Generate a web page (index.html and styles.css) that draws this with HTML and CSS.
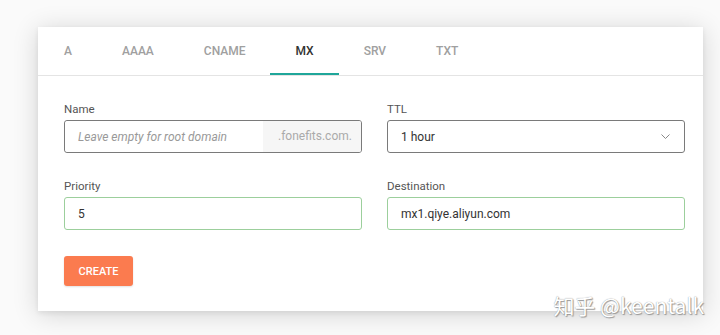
FILE: index.html
```html
<!DOCTYPE html>
<html lang="en">

<head>
    <meta charset="UTF-8">
    <meta name="viewport" content="width=device-width, initial-scale=1.0">
    <title>DNS Records</title>
    <link rel="stylesheet" href="styles.css">
</head>

<body>
    <div class="card">
        <!-- Record types -->
        <div class="tabs">
            <div class="tab">A</div>
            <div class="tab">AAAA</div>
            <div class="tab">CNAME</div>
            <div class="tab active">MX</div>
            <div class="tab">SRV</div>
            <div class="tab">TXT</div>
        </div>

        <!-- MX record form -->
        <form class="record-form">
            <div class="form-row">
                <div class="form-group">
                    <label>Name</label>
                    <div class="input-group">
                        <input class="form-control" type="text" placeholder="Leave empty for root domain">
                        <span class="addon">.fonefits.com.</span>
                    </div>
                </div>
                <div class="form-group">
                    <label>TTL</label>
                    <div class="select">
                        <span>1 hour</span>
                        <svg width="9" height="5" viewBox="0 0 9 5">
                            <path d="M0.5 0.5 L4.5 4.5 L8.5 0.5" fill="none" stroke="#888" stroke-width="1"/>
                        </svg>
                    </div>
                </div>
            </div>
            <div class="form-row">
                <div class="form-group">
                    <label>Priority</label>
                    <input class="form-control valid" type="text" value="5">
                </div>
                <div class="form-group">
                    <label>Destination</label>
                    <input class="form-control valid" type="text" value="mx1.qiye.aliyun.com">
                </div>
            </div>
            <button type="button" class="btn-create">CREATE</button>
        </form>
    </div>

    <div class="watermark">知乎 @keentalk</div>
</body>

</html>
```

FILE: styles.css
```css
* {
    margin: 0;
    padding: 0;
    box-sizing: border-box;
}

body {
    font-family: Roboto, 'Liberation Sans', sans-serif;
    background: #fafafa;
    width: 720px;
    height: 335px;
    padding: 27px 0 0 38px;
    overflow: hidden;
    position: relative;
}

.card {
    width: 665px;
    height: 284px;
    background: white;
    box-shadow: 0 3px 24px rgba(0, 0, 0, 0.16), 0 2px 5px rgba(0, 0, 0, 0.07);
}

.tabs {
    display: flex;
    height: 49px;
    border-bottom: 1px solid #e4e4e4;
    padding-left: 1px;
}

.tab {
    padding: 0 25px;
    line-height: 48px;
    font-size: 12px;
    font-weight: 500;
    color: #a0a0a0;
    border-bottom: 2px solid transparent;
}

.tab.active {
    color: #333;
    border-bottom-color: #1fa69a;
}

.record-form {
    padding: 26px 18px 0 26px;
}

.form-row {
    display: grid;
    grid-template-columns: 298px 298px;
    gap: 25px;
    margin-bottom: 26px;
}

.form-group label {
    display: block;
    font-size: 11.5px;
    line-height: 14px;
    color: #555;
    margin-bottom: 4px;
}

.form-control {
    width: 100%;
    height: 33px;
    padding: 0 13px;
    border: 1px solid #7a7a7a;
    border-radius: 3px;
    font-family: inherit;
    font-size: 12px;
    color: #333;
    outline: none;
}

.form-control::placeholder {
    color: #999;
    font-style: italic;
}

.form-control.valid {
    border-color: #9ccf9c;
}

.input-group {
    display: flex;
    height: 33px;
    border: 1px solid #7a7a7a;
    border-radius: 3px;
    overflow: hidden;
}

.input-group .form-control {
    border: none;
    height: 31px;
    flex: 1;
    min-width: 0;
}

.addon {
    width: 98px;
    background: #f6f6f6;
    color: #aaa;
    font-size: 12px;
    line-height: 31px;
    padding-left: 15px;
}

.select {
    display: flex;
    justify-content: space-between;
    align-items: center;
    height: 33px;
    padding: 0 14px 0 13px;
    border: 1px solid #7a7a7a;
    border-radius: 3px;
    font-size: 12px;
    color: #333;
}

.btn-create {
    width: 69px;
    height: 30px;
    border: none;
    border-radius: 3px;
    background: #fb7b4f;
    color: white;
    font-family: inherit;
    font-size: 11px;
    font-weight: 500;
    box-shadow: 0 1px 2px rgba(0, 0, 0, 0.12);
}

.watermark {
    position: absolute;
    right: 16px;
    bottom: 18px;
    font-family: 'Noto Sans CJK SC', 'Liberation Sans', sans-serif;
    font-size: 21px;
    line-height: 24px;
    color: white;
    text-shadow: 0 0 1px #888, 1px 1px 1px #999;
}
```
